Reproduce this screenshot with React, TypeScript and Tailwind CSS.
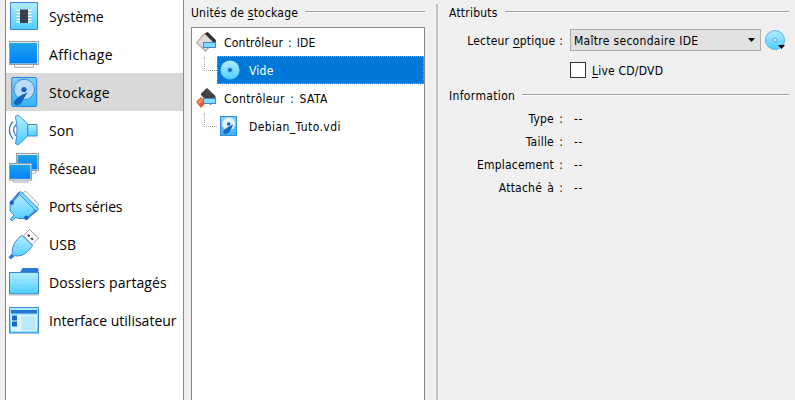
import type { ReactNode } from "react";

const OUT = "#3d86d8";

function Gradients() {
  return (
    <svg className="absolute h-0 w-0" aria-hidden="true">
      <defs>
        <linearGradient id="sky" x1="0" y1="0" x2="0" y2="1">
          <stop offset="0" stopColor="#b4edff" />
          <stop offset="1" stopColor="#4dcdff" />
        </linearGradient>
        <linearGradient id="screen" x1="0" y1="0" x2="0" y2="1">
          <stop offset="0" stopColor="#20a4e6" />
          <stop offset="1" stopColor="#0080fa" />
        </linearGradient>
        <linearGradient id="disk" x1="0" y1="0" x2="0" y2="1">
          <stop offset="0" stopColor="#84cff8" />
          <stop offset="1" stopColor="#32b4f8" />
        </linearGradient>
      </defs>
    </svg>
  );
}

function Icon({ children }: { children: ReactNode }) {
  return (
    <svg className="h-8 w-8 shrink-0" viewBox="0 0 32 32" fill="none">
      {children}
    </svg>
  );
}

const systemIcon = (
  <Icon>
    <rect x="2.5" y="2.5" width="27" height="27" fill="url(#sky)" stroke={OUT} />
    <path d="M8.5 10.5h15M8.5 13.5h15M8.5 16.5h15M8.5 19.5h15M8.5 22h15" stroke="#fff" strokeWidth="1.6" />
    <path d="M8.5 11.7h15M8.5 14.7h15M8.5 17.7h15M8.5 20.7h15" stroke="#8fb9c8" strokeWidth=".7" />
    <rect x="12" y="9.500" width="8" height="13.500" fill="#3a3f49" />
  </Icon>
);

const displayIcon = (
  <Icon>
    <path d="M6.5 27v2.300h19V27" fill="#fff" stroke="#a6a6a6" />
    <rect x="1.500" y="3.500" width="29" height="23" fill="#e8eef2" stroke="#9a9fa4" />
    <rect x="2" y="5" width="27" height="20.500" fill="url(#screen)" />
  </Icon>
);

const storageIcon = (
  <Icon>
    <rect x="3.700" y="1.500" width="25" height="29" rx="1.500" fill="url(#disk)" stroke="#2c83d8" />
    <circle cx="16.200" cy="13.500" r="10.300" fill="#b9dcf8" stroke="#3988d8" />
    <circle cx="16" cy="13.500" r="2.600" fill="#1760bb" />
    <path d="M19.500 16.500c-5 1.500-10 4.500-13 8.500-1.200 1.800-.5 3.300 1 4 2.500.8 5-.5 6.200-2.500 2-3.500 3.500-6.500 5.800-10z" fill="#1464be" />
  </Icon>
);

const soundIcon = (
  <Icon>
    <path d="M5.200 7.500C.2 12 .2 20 5.200 25" stroke="#3277cc" strokeWidth="1.300" />
    <path d="M8 10.500C5 14 5 18.500 8 22" stroke="#3277cc" strokeWidth="1.200" />
    <path d="M7.500 2.500q2-2.200 4-.3L19.800 10v12l-8.300 7.800q-2 2-4-.3 3-13 0-27z" fill="url(#sky)" stroke={OUT} />
    <path d="M19.800 10.500h9.200V22h-9.200z" fill="url(#sky)" stroke={OUT} />
  </Icon>
);

const networkIcon = (
  <Icon>
    <path d="M12 18v3h16v-2" stroke="#b0b0b0" />
    <rect x="8.500" y="1.500" width="22" height="17" fill="#edf2f5" stroke="#929da4" />
    <rect x="9.500" y="3" width="20" height="14.500" fill="url(#screen)" />
    <path d="M5 28v2h15v-2" fill="#fff" stroke="#ababab" />
    <rect x="1.500" y="11.500" width="22" height="16.500" fill="#edf2f5" stroke="#929da4" />
    <rect x="2" y="12.800" width="20.500" height="14" fill="url(#screen)" />
  </Icon>
);

const serialIcon = (
  <Icon>
    <path d="m14.500 3 2-1.300q1.200-.7 2.200.3L30 13.500q1 1.200 0 2.300L28 18z" fill="#fff" stroke="#aaa" />
    <path d="M11 2.500q1.500-1.700 3 0L30 18.200q.8 1.200-.3 2.300l-2 .5L11 5z" fill="#7cdbff" stroke={OUT} />
    <path d="M11.500 4.500 27 20l-7 8.500H9.500L8 27l-4 4-1.800-1.600L6 25l-4-4v-6z" fill="url(#sky)" stroke={OUT} />
    <path d="M11.300 2.500 3 12.500M28.500 20.500l-9 7.500" stroke={OUT} strokeWidth="2" />
    <circle cx="3.700" cy="12.700" r="2.200" fill="#1766ce" />
    <circle cx="18.300" cy="27.700" r="2.200" fill="#1766ce" />
  </Icon>
);

const usbIcon = (
  <Icon>
    <path d="m21.500 1.500 9 8.500-6.500 6.500-8.500-8.500z" fill="#fff" stroke="#999" />
    <path d="m19.800 6.800 1.700 1.700M23.200 10l1.700 1.700" stroke="#444" strokeWidth="2" />
    <path d="M14 7.500 24.500 17.500C21 23.500 16 27.500 9.500 28l-2.800-.3-4 3.300-1.700-1.700 3.500-4-.3-2.800C5 16 9 10.500 14 7.500z" fill="url(#sky)" stroke={OUT} />
    <path d="m1 29 2 2 3.200-3-2-2z" fill="#2d7ed7" />
  </Icon>
);

const foldersIcon = (
  <Icon>
    <path d="M12 6.500 14.500 2H29q1.500 0 1.500 1.500V8H12z" fill="#2a78d3" />
    <path d="M1.500 6.500h29v21.500h-29z" fill="url(#sky)" stroke={OUT} />
    <path d="M1 29h30" stroke="#bbb" />
  </Icon>
);

const interfaceIcon = (
  <Icon>
    <rect x="1.500" y="3.500" width="29" height="25.500" fill="url(#sky)" stroke={OUT} />
    <path d="M3 6h26v3.500H3z" fill="#2874cf" />
    <path d="M3 11h26v16.500H3z" fill="#e1f7ff" />
    <path d="M4 11.500h5v5H4zM4 17.500h5v5H4z" fill="#1766ca" />
    <path d="M13.500 12h14v14.500h-14z" fill="#b9eafb" />
  </Icon>
);

const sections: { label: string; icon: ReactNode; tracking: string }[] = [
  { label: "Système", icon: systemIcon, tracking: "tracking-[-0.05px]" },
  { label: "Affichage", icon: displayIcon, tracking: "tracking-[0.4px]" },
  { label: "Stockage", icon: storageIcon, tracking: "tracking-[0.3px]" },
  { label: "Son", icon: soundIcon, tracking: "tracking-[0.1px]" },
  { label: "Réseau", icon: networkIcon, tracking: "tracking-[-0.05px]" },
  { label: "Ports séries", icon: serialIcon, tracking: "tracking-[-0.25px]" },
  { label: "USB", icon: usbIcon, tracking: "tracking-[0px]" },
  { label: "Dossiers partagés", icon: foldersIcon, tracking: "tracking-[0.08px]" },
  { label: "Interface utilisateur", icon: interfaceIcon, tracking: "tracking-[0px]" },
];

function Sidebar() {
  return (
    <nav className="ml-[5px] w-[179px] shrink-0 overflow-hidden border-x border-[#828790] bg-white font-['Open_Sans','Noto_Sans',sans-serif] text-[14px]">
      <ul className="-mt-[3px]">
        {sections.map((s) => (
          <li
            key={s.label}
            className={`flex h-[38px] items-center gap-[9px] pl-[2px] ${s.label === "Stockage" ? "bg-[#d9d9d9]" : ""}`}
          >
            {s.icon}
            <span className={`pt-[2px] whitespace-nowrap ${s.tracking}`}>{s.label}</span>
          </li>
        ))}
      </ul>
    </nav>
  );
}

function GroupTitle({ children }: { children: ReactNode }) {
  return (
    <h2 className="flex h-4 items-center gap-[7px] whitespace-nowrap">
      <span>{children}</span>
      <span className="-mt-[2px] h-[2px] flex-1 border-b border-white bg-[#a0a0a0]" />
    </h2>
  );
}

function Controller({ sata }: { sata?: boolean }) {
  return (
    <svg className="h-5 w-5 shrink-0" viewBox="0 0 20 20">
      {sata ? (
        <>
          <path d="M4.500 6.500 10 .5q.8-.7 1.600 0L19.500 8v5l-5 4z" fill="#454545" />
          <path d="m6 4.500 9 9" stroke="#2a2a2a" />
          <path d="M0 14 5 9l5 5.500L5 20z" fill="#e65a32" />
          <path d="m1.500 14 3.500-3.500 2 2.300-3.500 3.700z" fill="#f58a64" />
        </>
      ) : (
        <>
          <path d="M0 11 9.500.5 19 10l-9.500 10z" fill="#a9a9a9" />
          <path d="M1 10.500 9.500 1.500l8 8.500-8 8z" fill="#dcdcdc" />
          <path d="m.5 10.500 8.500-9.500" stroke="#e07f5e" />
          <path d="M9 2 10.500.3h1.500L19.800 8v3.500h-1.300z" fill="#2e2e2e" />
        </>
      )}
      <rect x="7.500" y="10.500" width="12" height="5" fill="#82dcff" stroke="#4189cf" />
    </svg>
  );
}

function Branch() {
  return (
    <span className="mb-[13px] ml-3 h-[14px] w-[13px] shrink-0 border-b border-l border-dotted border-[#a0a0a0]" />
  );
}

function StorageTree() {
  return (
    <section className="ml-[7px] flex w-[234px] shrink-0 flex-col pt-[5px] tracking-[0.22px]">
      <GroupTitle>
        Unités de <u className="underline-offset-2">s</u>tockage
      </GroupTitle>
      <div className="mt-[6px] flex-1 border border-b-0 border-[#828790] bg-white">
        <div className="flex h-7 items-center gap-2 pl-1">
          <Controller />
          <span className="pt-[2px] [word-spacing:1.2px]">Contrôleur : IDE</span>
        </div>
        <div className="flex h-7 items-center">
          <Branch />
          <div className="flex h-7 flex-1 items-center gap-[9px] bg-[#0078d7] pl-[3px] text-white outline-1 -outline-offset-1 outline-dotted outline-[#f09245]">
            <svg className="h-5 w-5" viewBox="0 0 20 20">
              <circle cx="10" cy="10" r="9.500" fill="url(#sky)" />
              <circle cx="10" cy="10" r="2.600" fill="#176fca" stroke="#78cef5" />
            </svg>
            <span className="pt-[2px]">Vide</span>
          </div>
        </div>
        <div className="flex h-7 items-center gap-2 pl-1">
          <Controller sata />
          <span className="pt-[2px] tracking-[0.4px] [word-spacing:1.5px]">Contrôleur : SATA</span>
        </div>
        <div className="flex h-7 items-center">
          <Branch />
          <div className="flex h-7 flex-1 items-center gap-[9px] pl-[2px]">
            <svg className="ml-px h-5 w-5" viewBox="0 0 20 20">
              <rect x=".5" y=".5" width="16" height="19" fill="url(#disk)" stroke="#348bd9" />
              <circle cx="8.700" cy="8" r="6.500" fill="#e2f3ff" />
              <circle cx="8.700" cy="8" r="1.800" fill="#1463ba" />
              <path d="M13 8.500c-4 1.500-7.500 3.500-9.500 6.500-1 2 .5 3.500 2.500 3 3-.8 5.500-4 7-9.500z" fill="#1769c1" />
            </svg>
            <span className="pt-[2px] tracking-[0.42px]">Debian_Tuto.vdi</span>
          </div>
        </div>
      </div>
    </section>
  );
}

const info = ["Type :", "Taille :", "Emplacement :", "Attaché à :"];

function Attributes() {
  return (
    <section className="ml-[11px] w-[340px] shrink-0 pt-[5px] tracking-[0.22px]">
      <GroupTitle>Attributs</GroupTitle>
      <div className="mt-2 flex h-[22px] items-center">
        <span className="w-[114px] pt-[2px] text-right whitespace-nowrap">
          Lecteur <u className="underline-offset-2">o</u>ptique :
        </span>
        <button className="ml-[7px] flex h-[22px] w-[191px] items-center justify-between border border-[#adadad] bg-[#e1e1e1] pr-[5px] pl-[3px]">
          <span className="pt-[2px] tracking-[0.3px] whitespace-nowrap">Maître secondaire IDE</span>
          <svg className="h-1 w-[7px]" viewBox="0 0 7 4">
            <path d="M0 0h7L3.500 4z" fill="#000" />
          </svg>
        </button>
        <svg className="ml-1 h-5 w-[21px]" viewBox="0 0 21 20">
          <circle cx="10" cy="10" r="9.500" fill="url(#sky)" stroke="#62b1ec" />
          <circle cx="10" cy="10" r="2" fill="#d7effa" stroke="#61a8d5" />
          <path d="M13 15h7l-3.500 4z" fill="#000" />
        </svg>
      </div>
      <label className="mt-[11px] ml-[121px] flex h-4 items-center gap-[6px]">
        <span className="h-4 w-4 border border-[#333] bg-white" />
        <span className="pt-px">
          <u className="underline-offset-2">L</u>ive CD/DVD
        </span>
      </label>
      <div className="mt-[10px] tracking-[0.35px]">
        <GroupTitle>Information</GroupTitle>
      </div>
      <dl className="mt-[3px]">
        {info.map((label) => (
          <div key={label} className="flex h-[23px] items-center">
            <dt className="w-[114px] text-right whitespace-nowrap [word-spacing:1.5px]">{label}</dt>
            <dd className="ml-[11px] tracking-[0.6px]">--</dd>
          </div>
        ))}
      </dl>
    </section>
  );
}

export default function App() {
  return (
    <main className="relative flex h-[400px] w-[795px] overflow-hidden bg-[#f0f0f0] font-['DejaVu_Sans_Condensed','DejaVu_Sans',sans-serif] text-[12px] leading-4 text-black">
      <Gradients />
      <Sidebar />
      <StorageTree />
      <div className="mt-1 ml-[11px] w-[2px] shrink-0 bg-[#c5c5c5]" />
      <Attributes />
    </main>
  );
}
